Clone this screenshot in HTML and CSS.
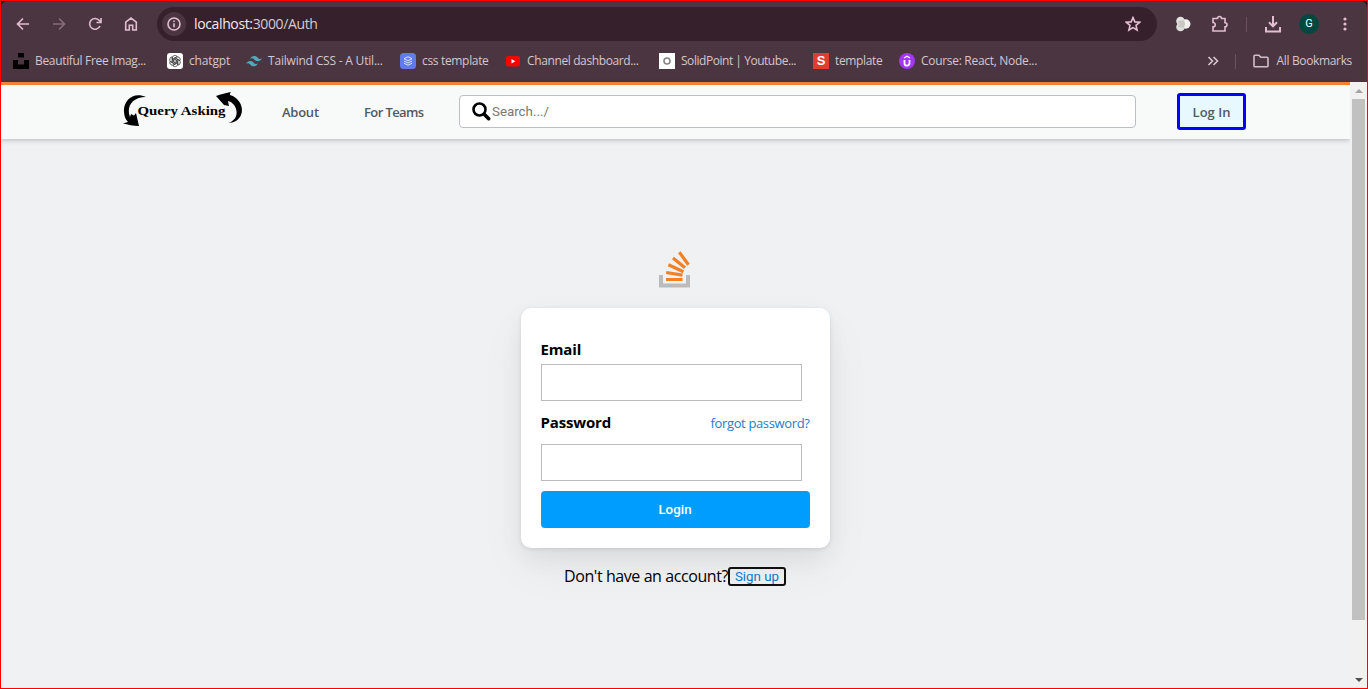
FILE: index.html
```html
<!DOCTYPE html>
<html lang="en">
<head>
<meta charset="utf-8">
<title>Query Asking</title>
<link rel="stylesheet" href="styles.css">
</head>
<body>
<div class="window">
  <header class="chrome">
    <div class="toolbar">
      <div class="nav-icons">
        <svg width="16" height="16" viewBox="0 0 16 16"><path d="M14 8H2.500M8 2.500L2.500 8 8 13.500"/></svg>
        <svg class="dim" width="16" height="16" viewBox="0 0 16 16"><path d="M2 8h11.500M8 2.500L13.500 8 8 13.500"/></svg>
        <svg width="16" height="16" viewBox="0 0 16 16"><path d="M13 10A5.400 5.400 0 1 1 12.300 4.500L14 6.200M14 2v4.500H9.500"/></svg>
        <svg width="16" height="16" viewBox="0 0 16 16"><path d="M2.700 6.200L8 2l5.300 4.200V14H9.700V9.300H6.300V14H2.700z"/></svg>
      </div>
      <div class="address">
        <span class="info"><svg width="16" height="16" viewBox="0 0 16 16"><circle cx="8" cy="8" r="6"/><path d="M8 7.300v4M8 4.500v1.500"/></svg></span>
        <span class="url"><b>localhost:</b>3000/Auth</span>
        <svg class="star" width="16" height="16" viewBox="0 0 16 16"><path d="M8 1.600l1.900 4.300 4.700.4-3.600 3.100 1.100 4.600L8 11.600 3.900 14 5 9.400 1.400 6.300l4.700-.4z"/></svg>
      </div>
      <div class="actions">
        <svg width="16" height="16" viewBox="0 0 16 16"><g stroke="none"><circle cx="5.500" cy="5" r="4.300" fill="#e3e1e0"/><circle cx="5.500" cy="11" r="4.300" fill="#dedddb"/><circle cx="10.800" cy="8" r="4.700" fill="#f1f0ee"/><path d="M2.500 5.500L9 4l1 4-1 4-6.500-1.500L5 8z" fill="#c9c6c4"/></g></svg>
        <svg width="18" height="18" viewBox="0 0 18 18"><path d="M2 3.500h4.500a2 2 0 0 1 4 0H14v4.300a2 2 0 0 1 0 4V16H2v-4.200c3 0 3-4.300 0-4.300z"/></svg>
        <i class="rule"></i>
        <svg width="18" height="18" viewBox="0 0 18 18"><path stroke-width="2" d="M9 1v10M5 7.300l4 4 4-4M2 12v4.500h14V12"/></svg>
        <span class="avatar">G</span>
        <svg width="6" height="16" viewBox="0 0 6 16"><g stroke="none" fill="#e2bfd0"><circle cx="3" cy="3" r="1.600"/><circle cx="3" cy="8" r="1.600"/><circle cx="3" cy="13" r="1.600"/></g></svg>
      </div>
    </div>
    <div class="bookmarks">
      <div class="marks">
        <span class="mark"><svg width="16" height="16" viewBox="0 0 16 16"><path stroke="none" fill="#000" d="M5 0h6v4.500H5zM0 7h5v4.500h6V7h5v9H0z"/></svg><span class="t1">Beautiful Free Imag...</span></span>
        <span class="mark"><svg width="16" height="16" viewBox="0 0 16 16"><rect width="16" height="16" rx="3" fill="#fff" stroke="none"/><g stroke="#333" stroke-width=".75"><path d="M5.300 9.500V5a2.700 2.700 0 0 1 4.900-1.500L6.700 5.600v3.600"/><path d="M5.300 9.500V5a2.700 2.700 0 0 1 4.900-1.500L6.700 5.600v3.600" transform="rotate(60 8 8)"/><path d="M5.300 9.500V5a2.700 2.700 0 0 1 4.900-1.500L6.700 5.600v3.600" transform="rotate(120 8 8)"/><path d="M5.300 9.500V5a2.700 2.700 0 0 1 4.900-1.500L6.700 5.600v3.600" transform="rotate(180 8 8)"/><path d="M5.300 9.500V5a2.700 2.700 0 0 1 4.900-1.500L6.700 5.600v3.600" transform="rotate(240 8 8)"/><path d="M5.300 9.500V5a2.700 2.700 0 0 1 4.900-1.500L6.700 5.600v3.600" transform="rotate(300 8 8)"/></g></svg><span class="t2">chatgpt</span></span>
        <span class="mark"><svg width="16" height="16" viewBox="0 0 16 16"><path stroke="none" fill="#4babb9" d="M4 6.500C4.600 4.200 6 3 8.200 3c3.200 0 3.500 2.500 5.200 2.900 1.100.3 2-.1 2.600-1.200C15.400 7 14 8.200 11.800 8.200c-3.200 0-3.500-2.400-5.200-2.900-1.100-.2-2 .1-2.600 1.200zM0 11.600c.6-2.300 2-3.500 4.200-3.500 3.200 0 3.500 2.500 5.200 2.900 1.100.3 2-.1 2.600-1.200-.6 2.300-2 3.500-4.200 3.500-3.200 0-3.500-2.500-5.200-2.900-1.100-.3-2 .1-2.600 1.200z"/></svg><span class="t3">Tailwind CSS - A Util...</span></span>
        <span class="mark"><svg width="16" height="16" viewBox="0 0 16 16"><rect width="16" height="16" rx="3.500" fill="#627bea" stroke="none"/><path stroke="#dce3ff" stroke-width="1" d="M8 3.700l4 2-4 2-4-2zM4 8l4 2 4-2M4 10.200l4 2 4-2"/></svg><span class="t4">css template</span></span>
        <span class="mark"><svg width="16" height="16" viewBox="0 0 16 16"><rect x="1" y="3" width="14" height="10.500" rx="2.500" fill="#f00" stroke="none"/><path fill="#fff" stroke="none" d="M6.500 6v4.500l3.800-2.250z"/></svg><span class="t5">Channel dashboard...</span></span>
        <span class="mark"><svg width="16" height="16" viewBox="0 0 16 16"><rect width="16" height="16" fill="#fff" stroke="none"/><circle cx="8" cy="8" r="3" stroke="#858585"/></svg><span class="t6">SolidPoint | Youtube...</span></span>
        <span class="mark"><b class="tile">S</b><span class="t7">template</span></span>
        <span class="mark"><svg width="16" height="16" viewBox="0 0 16 16"><circle cx="8" cy="8" r="8" fill="#a435f0" stroke="none"/><path stroke="#fff" stroke-width="1.800" d="M5.500 7v3.200a2.500 2.500 0 0 0 5 0V7"/><path stroke="#fff" stroke-width="1.300" d="M5 5l3-1.800L11 5"/></svg><span class="t8">Course: React, Node...</span></span>
      </div>
      <div class="marks-end">
        <svg width="12" height="12" viewBox="0 0 12 12"><path stroke="#d8c6ce" d="M1.500 2L5.500 6l-4 4M6.500 2l4 4-4 4"/></svg>
        <i class="rule"></i>
        <svg width="16" height="14" viewBox="0 0 16 14"><path stroke="#cfc0c7" d="M1 2.200q0-1 1-1h4l1.700 2H14q1 0 1 1V12q0 .8-1 .8H2q-1 0-1-.8z"/></svg>
        <span class="t9">All Bookmarks</span>
      </div>
    </div>
  </header>
  <div class="view">
    <div class="page">
      <nav class="nav">
        <svg class="logo" width="122" height="38" viewBox="0 0 122 38"><path d="M24 5C11-1 1 9 2 20c.3 5 2 8 4 10l-5 1.500c5 1 10 2.500 16 2.500l-3-13-2 2.500L9 22l-1 3C4 15 10 5 24 5zM94 4c5-2 10-3 15-4-1 1-1 2-1 3 10 3 14 13 11 20-2 5-7 8-13 8 7-2 10-8 8-14-1-4-4-7-8-8l1 5-5-1z"/><text x="15.500" y="22.500" textLength="88" lengthAdjust="spacingAndGlyphs">Query Asking</text></svg>
        <a class="link about">About</a>
        <a class="link teams">For Teams</a>
        <div class="search">
          <svg width="20" height="20" viewBox="0 0 20 20"><circle cx="7.500" cy="7.500" r="6" stroke="#000" stroke-width="2.600"/><path stroke="#000" stroke-width="3.600" stroke-linecap="round" d="M12.500 12.500l4.200 4.200"/></svg>
          <span>Search.../</span>
        </div>
        <a class="login-link"><span>Log In</span></a>
      </nav>
      <main class="auth">
        <svg class="brand" width="32" height="38" viewBox="0 0 32 38"><path stroke="#bcbbbb" stroke-width="4" d="M2 25v10.500h27V25"/><g stroke="#f48024" stroke-width="3.200"><path d="M7 29.500h16.500M7.200 22.500l16.300 2.700M9.400 14.800l15 7M14 8L26 17.800M20.300 2.200l9.200 12.500"/></g></svg>
        <form class="card">
          <label class="label">Email</label>
          <div class="field"></div>
          <div class="row"><label class="label pw">Password</label><a class="forgot">forgot password?</a></div>
          <div class="field"></div>
          <button class="submit" type="button">Login</button>
        </form>
        <p class="signup"><span class="ask">Don't have an account?</span><a class="join">Sign up</a></p>
      </main>
    </div>
    <div class="scrollbar"><i class="up"></i><i class="thumb"></i><i class="down"></i></div>
  </div>
</div>
</body>
</html>
```
FILE: styles.css
```css
* { box-sizing: border-box; }
body { margin: 0; font-family: "Open Sans", "Noto Sans", sans-serif; }
svg { display: block; fill: none; stroke: #e2bfd0; stroke-width: 1.6; flex: none; }
span, a { white-space: nowrap; }
.window { width: 1368px; height: 689px; border: 1px solid red; display: flex; flex-direction: column; overflow: hidden; background: #241820; }
.chrome { height: 81px; background: #4b3541; border-radius: 7px 7px 0 0; flex: none; }
.toolbar { display: flex; height: 46px; align-items: center; }
.nav-icons { display: flex; gap: 20px; padding-left: 14px; width: 156px; }
.dim { opacity: .4; }
.address { display: flex; align-items: center; width: 1000px; height: 34px; border-radius: 17px; background: #35202b; padding: 0 16px 0 5px; }
.info { width: 24px; height: 24px; border-radius: 50%; background: #4b3541; display: grid; place-items: center; }
.url { margin: -1px 0 0 8px; font-size: 14px; color: #dac8d0; letter-spacing: -.37px; }
.url b { font-weight: 400; color: #f6e8ee; }
.star { margin-left: auto; }
.actions { display: flex; align-items: center; width: 210px; padding-left: 18px; }
.actions > :nth-child(2) { margin-left: 20px; }
.actions > :nth-child(3) { margin-left: 17px; }
.actions > :nth-child(4) { margin-left: 17px; }
.actions > :nth-child(5) { margin-left: 17px; }
.actions > :nth-child(6) { margin-left: 23px; }
.rule { width: 1px; height: 15px; background: #70505f; }
.avatar { width: 20px; height: 20px; border-radius: 50%; background: #00473d; color: #fff; font: 11px/20px Roboto, sans-serif; text-align: center; }
.bookmarks { display: flex; height: 35px; padding: 0 15px 7px 12px; justify-content: space-between; align-items: center; font-size: 12px; color: #d5c6cd; }
.marks { display: grid; grid-template-columns: 154px 79px 154px 105px 154px 154px 86px auto; }
.mark { display: flex; align-items: center; gap: 6px; height: 16px; }
.mark > span { line-height: 16px; margin-top: -1px; }
.t1 { letter-spacing: -.33px; }
.t2 { letter-spacing: -.15px; }
.t3 { letter-spacing: -.2px; }
.t4 { letter-spacing: -.33px; }
.t5 { letter-spacing: -.38px; }
.t6 { letter-spacing: -.46px; }
.t7 { letter-spacing: -.35px; }
.t8 { letter-spacing: -.3px; }
.t9 { letter-spacing: -.35px; margin-left: 8px; line-height: 16px; margin-top: -1px; }
.tile { width: 16px; height: 16px; background: #e03c31; color: #fff; font: bold 13px/16px "Liberation Sans", sans-serif; text-align: center; }
.marks-end { display: flex; align-items: center; }
.marks-end .rule { margin: 0 17px 0 16px; }
.view { display: flex; flex: 1; min-height: 0; }
.page { flex: 1; background: #f0f1f3; display: flex; flex-direction: column; }
.nav { height: 57px; border-top: 3px solid #f48236; background: #f8faf9; box-shadow: 0 1px 5px rgba(0,0,0,.25); display: flex; align-items: center; padding-left: 122px; flex: none; }
.logo { fill: #000; stroke: none; margin: -2px 0 0 -1px; }
.logo text { font: bold 13px "Liberation Serif", serif; }
.link { font-size: 13px; font-weight: 600; color: #525960; width: 82px; letter-spacing: -.25px; }
.about { margin-left: 38px; }
.teams { width: 95px; letter-spacing: -.6px; }
.search { width: 677px; height: 33px; border: 1px solid #bbbfc2; border-radius: 4px; background: #fff; display: flex; align-items: center; padding-left: 12px; color: #777; font: 13.333px Roboto, sans-serif; margin-top: -1px; }
.login-link { margin: -1px 0 0 41px; width: 69px; height: 37px; border: 3px solid #0000fb; border-radius: 3px; background: #e7f8fe; display: grid; place-items: center; font-size: 13px; font-weight: 600; color: #525960; }
.auth { display: flex; flex-direction: column; align-items: center; padding: 111px 1px 0 0; }
.card { margin: 20px 0 0; width: 309px; height: 240px; border-radius: 10px; background: #fff; padding: 30px 20px 20px; display: flex; flex-direction: column; box-shadow: 0 10px 25px rgba(0,0,0,.05), 0 20px 48px rgba(0,0,0,.05), 0 1px 4px rgba(0,0,0,.1); }
.label { font-size: 15px; font-weight: 700; line-height: 22px; height: 26px; color: #000; letter-spacing: -.15px; }
.field { width: 261px; height: 37px; border: 1px solid #bbb; background: #fff; flex: none; }
.row { display: flex; justify-content: space-between; height: 43px; align-items: center; }
.row .label { height: 24px; }
.forgot { font-size: 13px; color: #1780d1; letter-spacing: -.36px; }
.submit { margin-top: 10px; height: 37px; border: 0; border-radius: 4px; background: #009dff; color: #fff; font: 500 13.333px Roboto, sans-serif; flex: none; padding: 0; }
.signup { margin: 18px 0 0; display: flex; align-items: center; font-size: 16px; line-height: 20px; height: 20px; }
.ask { letter-spacing: -.42px; }
.join { width: 58px; height: 19px; border: 2px solid #101010; border-radius: 3px; color: #0b7ac9; font: 13.333px/15px Roboto, sans-serif; text-align: center; }
.scrollbar { width: 17px; background: #f1f1f1; display: flex; flex-direction: column; align-items: center; padding: 7px 1px 6px 1px; }
.up, .down { border: 4px solid transparent; border-top: 0; border-bottom: 4px solid #a3a3a3; }
.thumb { width: 13px; height: 521px; background: #c1c1c1; margin-top: 6px; }
.down { border-bottom: 0; border-top: 4px solid #505050; margin-top: auto; }
```
